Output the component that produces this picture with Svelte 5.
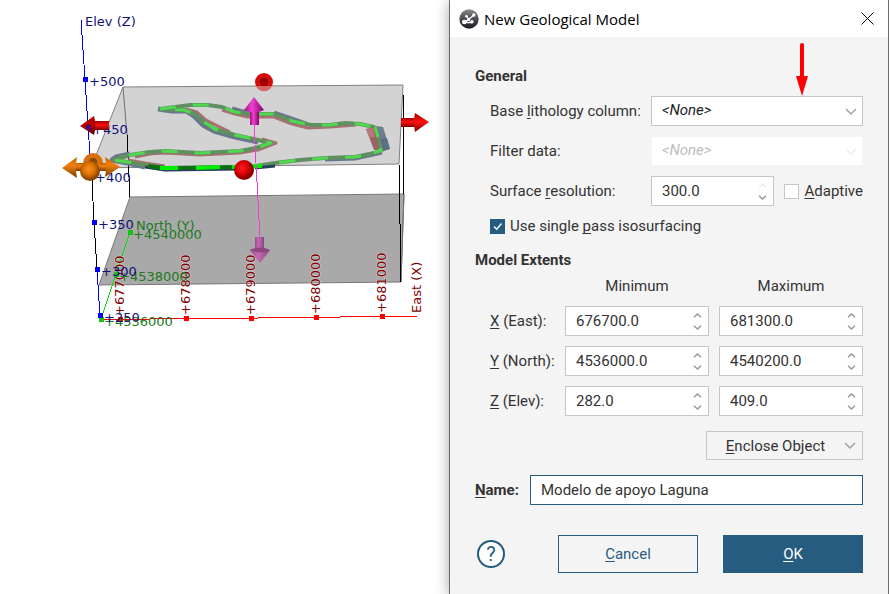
<script>
  let baseLithology = $state('none');
  let filterData = $state('none');
  let resolution = $state('300.0');
  let adaptive = $state(false);
  let singlePass = $state(true);
  let name = $state('Modelo de apoyo Laguna');

  let extents = $state([
    { id: 'x', key: 'X', rest: ' (East):', min: '676700.0', max: '681300.0' },
    { id: 'y', key: 'Y', rest: ' (North):', min: '4536000.0', max: '4540200.0' },
    { id: 'z', key: 'Z', rest: ' (Elev):', min: '282.0', max: '409.0' }
  ]);

  const elevTicks = [
    { x: 85, y: 79, tx: 89, ty: 86, label: '+500' },
    { x: 88, y: 127, tx: 92, ty: 134, label: '+450' },
    { x: 91, y: 175, tx: 95, ty: 182, label: '+400' },
    { x: 94, y: 222, tx: 98, ty: 229, label: '+350' },
    { x: 97, y: 269, tx: 101, ty: 276, label: '+300' },
    { x: 100, y: 315, tx: 104, ty: 322, label: '+250' }
  ];

  const northTicks = [
    { x: 130, y: 232, tx: 133, ty: 239, label: '+4540000' },
    { x: 116, y: 274, tx: 119, ty: 281, label: '+4538000' },
    { x: 101, y: 319, tx: 104, ty: 326, label: '+4536000' }
  ];

  const eastTicks = [
    { x: 120, y: 319, label: '+677000' },
    { x: 186, y: 318, label: '+678000' },
    { x: 251, y: 318, label: '+679000' },
    { x: 316, y: 317, label: '+680000' },
    { x: 382, y: 316, label: '+681000' }
  ];

  // closed outline of the lagoon surface
  const outline =
    'M160 109 L175 107 190 105 208 105 222 107 235 112 248 114 262 114 274 114 292 121 311 125 330 125 345 123 360 124 374 127 378 136 382 150 375 153 355 157 325 158 300 160 275 163 250 167 200 168 165 168 145 165 128 162 114 160 130 155 150 152 165 151 200 153 240 151 256 148 271 143 258 140 235 135 215 129 204 122 195 114 184 110 Z';

  function step(value, amount) {
    return (parseFloat(value) + amount).toFixed(1);
  }
</script>

{#snippet chevron(up)}
  <svg class="spin-icon" viewBox="0 0 9 5" aria-hidden="true">
    <path d={up ? 'M1 4.3 4.5 1 8 4.3' : 'M1 .7 4.5 4 8 .7'} />
  </svg>
{/snippet}

{#snippet dropIcon()}
  <svg class="drop-icon" viewBox="0 0 12 7" aria-hidden="true">
    <path d="M1 1 6 6 11 1" />
  </svg>
{/snippet}

<div class="app">
  <main class="scene">
    <svg viewBox="0 0 449 594" role="img" aria-label="3D model extents">
      <defs>
        <linearGradient id="redShaft" x1="0" y1="0" x2="0" y2="1">
          <stop offset="0" stop-color="#a00000" />
          <stop offset=".45" stop-color="#ff1010" />
          <stop offset="1" stop-color="#800000" />
        </linearGradient>
        <linearGradient id="darkRed" x1="0" y1="0" x2="0" y2="1">
          <stop offset="0" stop-color="#c00000" />
          <stop offset=".5" stop-color="#b00000" />
          <stop offset="1" stop-color="#600000" />
        </linearGradient>
        <linearGradient id="orangeShaft" x1="0" y1="0" x2="0" y2="1">
          <stop offset="0" stop-color="#c86400" />
          <stop offset=".4" stop-color="#f08010" />
          <stop offset="1" stop-color="#7a3c00" />
        </linearGradient>
        <linearGradient id="pinkShaft">
          <stop offset="0" stop-color="#a01080" />
          <stop offset=".4" stop-color="#f040d0" />
          <stop offset="1" stop-color="#800068" />
        </linearGradient>
        <linearGradient id="mauveShaft">
          <stop offset="0" stop-color="#96508a" />
          <stop offset=".4" stop-color="#c868b4" />
          <stop offset="1" stop-color="#82487a" />
        </linearGradient>
        <radialGradient id="redBall" cx=".4" cy=".4">
          <stop offset="0" stop-color="#ff2020" />
          <stop offset=".6" stop-color="#dc0000" />
          <stop offset="1" stop-color="#8c0000" />
        </radialGradient>
        <radialGradient id="orangeBall" cx=".45" cy=".4">
          <stop offset="0" stop-color="#ff9020" />
          <stop offset=".6" stop-color="#d87000" />
          <stop offset="1" stop-color="#8c4800" />
        </radialGradient>
      </defs>

      <!-- bounding box -->
      <polygon class="bottom-face" points="130,197 404,194 401,282 99,285" />
      <polygon class="top-face" points="123,87 403,85 399,164 91,168" />
      <path class="box-edge" d="M123 87 127 135 M404 194 401 282" />
      <path class="box-line" d="M127 135 130 197 M403 93 404 194 M399 164 401 282" />

      <!-- outline ribbon -->
      <g class="ribbon">
        <path class="ribbon-blue" d="M158 109 172 111 186 111 194 116 203 125 214 131 235 137 258 142 M232 109 250 114 M274 113 292 119 306 124 M145 167 128 163 112 160 116 157 130 154 M325 159 355 158 382 152" />
        <path class="ribbon-brown" d="M186 109 197 112 206 120 218 126 230 132 M222 110 235 114 248 117 274 117 292 124 308 128 330 127 356 125 M135 157 150 154 165 153 200 155 240 153 258 150 276 143 262 139 M128 160 145 163 165 166" />
        <path class="ribbon-base" d={outline} />
        <path class="ribbon-dash" d={outline} />
        <polygon fill="#9a6464" points="366,129 374,127 381,150 374,150" />
        <polygon fill="#b87878" points="366,129 373,128 375,137 369,137" />
        <polygon fill="#6c7e94" points="376,126 383,127 390,149 383,151" />
        <polygon fill="#5c6e84" points="380,139 387,138 390,149 383,151" />
        <path stroke="#609060" stroke-width="3" d="M376 127 381 150" />
        <path stroke="#50d850" stroke-width="3" d="M375 127 378 137 M382 149 374 153" />
      </g>
      <g class="front">
        <path class="front-shade" d="M145 167 165 170 240 169 M255 168 275 166" />
        <path class="front-dark" d="M148 166 165 168 240 167" />
        <path class="front-bright" d="M160 168 178 168 M196 168 220 167 M232 167 262 166" />
      </g>

      <!-- axes -->
      <path class="axis blue" d="M81 20 85 79 88 127 92 180" />
      <path class="axis black" d="M92 180 94 222 97 269" />
      <path class="axis blue" d="M97 269 100 316" />
      <path class="axis green" d="M101 319 130 232" />
      <path class="axis red" d="M101 319.5 H150 M150 318.5 H258 M258 317.5 H340 M340 316.5 H417" />
      {#each eastTicks as t}
        <rect x={t.x - 2} y={t.y - 2} width="5" height="5" fill="#ff0000" />
        <text class="label east" transform="translate({t.x + 4} {t.y - 3}) rotate(-90)">{t.label}</text>
      {/each}
      <text class="label east" transform="translate(421 313) rotate(-90)">East (X)</text>
      {#each northTicks as t}
        <rect x={t.x - 2} y={t.y - 2} width="5" height="5" fill="#14c414" />
        <text class="label north" x={t.tx} y={t.ty}>{t.label}</text>
      {/each}
      <text class="label north" x="136" y="230">North (Y)</text>
      {#each elevTicks as t}
        <rect x={t.x - 2} y={t.y - 2} width="5" height="5" fill="#0000ff" />
        <text class="label elev" x={t.tx} y={t.ty}>{t.label}</text>
      {/each}
      <text class="label elev" x="85" y="26">Elev (Z)</text>

      <!-- drag handles -->
      <path class="axis pink" d="M254 125 257 182 260 238" />
      <rect x="250" y="109" width="9" height="16" fill="url(#pinkShaft)" />
      <path fill="url(#pinkShaft)" d="M254 97 264 110 Q254 115 244 110 Z" />
      <rect x="255" y="237" width="9" height="15" fill="url(#mauveShaft)" />
      <path fill="url(#mauveShaft)" d="M250 250 Q260 245 270 250 L260 263 Z" />
      <path fill="#8c4880" d="M250 250 Q260 245 270 250 Q260 255 250 250 Z" />

      <circle cx="264" cy="82" r="9" fill="#d40c0c" />
      <circle cx="264" cy="82" r="4" fill="#800000" />
      <path fill="#a80000" d="M261 82 Q264 77 267 82 V87 H261 Z" />
      <path fill="#dc8080" fill-opacity=".75" d="M256 86 H272 Q264 97 256 86 Z" />

      <rect x="92" y="121" width="17" height="9" fill="url(#redShaft)" />
      <path fill="url(#darkRed)" d="M80 126 94 116 Q97 126 94 135 Z" />
      <rect x="86" y="125" width="5" height="5" fill="#500070" />
      <rect x="401" y="118" width="16" height="9" fill="url(#redShaft)" />
      <path fill="url(#redShaft)" d="M429 122 415 113 Q413 122 415 132 Z" />
      <circle cx="244" cy="170" r="10" fill="url(#redBall)" />

      <circle cx="93" cy="163" r="10" fill="#d87010" />
      <circle cx="93" cy="162" r="4" fill="#8c4600" />
      <rect x="75" y="163" width="32" height="8" fill="url(#orangeShaft)" />
      <path fill="url(#orangeShaft)" d="M62 168 77 157 Q75 167 77 178 Z" />
      <path fill="url(#orangeShaft)" d="M120 167 105 157 Q107 167 105 177 Z" />
      <circle cx="90" cy="171" r="10" fill="url(#orangeBall)" />
    </svg>
  </main>

  <section class="dialog" role="dialog" aria-labelledby="dialog-title">
    <header class="titlebar">
      <svg class="logo" viewBox="0 0 20 20" aria-hidden="true">
        <defs>
          <linearGradient id="logoFill" x1="0" y1="0" x2="0" y2="1">
            <stop offset="0" stop-color="#8a8a8d" />
            <stop offset=".5" stop-color="#4a4b4f" />
            <stop offset="1" stop-color="#1a1b20" />
          </linearGradient>
        </defs>
        <circle cx="10" cy="10" r="9.7" fill="url(#logoFill)" />
        <path d="M5 13.5 9.5 10.5 15 6 M5 13.5 H13 M7.5 7 9.5 10" stroke="#fff" stroke-width="1.3" fill="none" />
        <circle cx="5.3" cy="13" r="2.3" fill="#fff" />
        <circle cx="14.8" cy="6" r="1.7" fill="#fff" />
        <circle cx="7.5" cy="7.3" r="1.3" fill="#fff" />
        <circle cx="13" cy="12.7" r="1.7" fill="#fff" />
        <circle cx="9.7" cy="10.5" r="1.6" fill="#fff" />
      </svg>
      <h1 id="dialog-title">New Geological Model</h1>
      <button class="close" aria-label="Close">
        <svg viewBox="0 0 13 13" aria-hidden="true"><path d="M.5 .5 12.5 12.5 M12.5 .5 .5 12.5" /></svg>
      </button>
    </header>

    <form class="body" onsubmit={(e) => e.preventDefault()}>
      <h2>General</h2>
      <div class="fields">
        <label for="base">Base <u>l</u>ithology column:</label>
        <div class="select">
          <select id="base" bind:value={baseLithology}>
            <option value="none">&lt;None&gt;</option>
          </select>
          {@render dropIcon()}
        </div>

        <label for="filter">Filter data:</label>
        <div class="select disabled">
          <select id="filter" bind:value={filterData} disabled>
            <option value="none">&lt;None&gt;</option>
          </select>
          {@render dropIcon()}
        </div>

        <label for="resolution">Surface <u>r</u>esolution:</label>
        <div class="resolution">
          <div class="spin">
            <input id="resolution" type="text" inputmode="decimal" bind:value={resolution} />
            <div class="steps">
              <button type="button" class="faint" aria-label="Increase" onclick={() => (resolution = step(resolution, 1))}>{@render chevron(true)}</button>
              <button type="button" aria-label="Decrease" onclick={() => (resolution = step(resolution, -1))}>{@render chevron(false)}</button>
            </div>
          </div>
          <label class="check">
            <input type="checkbox" bind:checked={adaptive} />
            <span><u>A</u>daptive</span>
          </label>
        </div>
      </div>
      <label class="check single-pass">
        <input type="checkbox" bind:checked={singlePass} />
        <span>Use single <u>p</u>ass isosurfacing</span>
      </label>

      <h2>Model Extents</h2>
      <div class="extents">
        <span></span>
        <span class="column" id="col-min">Minimum</span>
        <span class="column" id="col-max">Maximum</span>
        {#each extents as row}
          <label for="{row.id}-min"><u>{row.key}</u>{row.rest}</label>
          {#each ['min', 'max'] as side}
            <div class="spin">
              <input id="{row.id}-{side}" type="text" inputmode="decimal" aria-describedby="col-{side}" aria-label="{row.key} {side}" bind:value={row[side]} />
              <div class="steps">
                <button type="button" aria-label="Increase" onclick={() => (row[side] = step(row[side], 1))}>{@render chevron(true)}</button>
                <button type="button" aria-label="Decrease" onclick={() => (row[side] = step(row[side], -1))}>{@render chevron(false)}</button>
              </div>
            </div>
          {/each}
        {/each}
      </div>

      <button type="button" class="enclose">
        <span><u>E</u>nclose Object</span>
        {@render dropIcon()}
      </button>

      <div class="name-row">
        <label for="name"><u>N</u>ame:</label>
        <input id="name" type="text" bind:value={name} />
      </div>

      <footer>
        <button type="button" class="help" aria-label="Help">?</button>
        <button type="button" class="action"><span><u>C</u>ancel</span></button>
        <button type="submit" class="action primary"><span><u>O</u>K</span></button>
      </footer>
    </form>

    <svg class="pointer" viewBox="0 0 12 53" aria-hidden="true">
      <path d="M6 2 V36" stroke="#ff0000" stroke-width="4" stroke-linecap="round" />
      <path d="M0 33 H12 L6 53 Z" fill="#ff0000" />
    </svg>
  </section>
</div>

<style>
  :global(body) {
    margin: 0;
    background: #fff;
  }

  .app {
    display: grid;
    grid-template-columns: minmax(0, 449fr) minmax(0, 440fr);
    min-height: 100vh;
    overflow: hidden;
    font-family: Roboto, "Liberation Sans", sans-serif;
    font-size: 15px;
    line-height: 20px;
    color: #333;
  }

  .scene svg {
    display: block;
    width: 100%;
    height: auto;
  }

  .top-face {
    fill: #d3d3d3;
    stroke: #808080;
    stroke-width: 1;
  }

  .bottom-face {
    fill: #a9a9a9;
    stroke: #787878;
    stroke-width: 1;
  }

  .box-edge {
    fill: none;
    stroke: #707070;
  }

  .box-line {
    fill: none;
    stroke: #000;
    shape-rendering: crispEdges;
  }

  .ribbon path,
  .front path {
    fill: none;
    stroke-linejoin: round;
  }

  .ribbon .ribbon-blue {
    stroke: #66788c;
    stroke-width: 5;
  }

  .ribbon .ribbon-brown {
    stroke: #a87070;
    stroke-width: 3;
  }

  .ribbon .ribbon-base {
    stroke: #609060;
    stroke-width: 4;
  }

  .ribbon .ribbon-dash {
    stroke: #50d850;
    stroke-width: 3;
    stroke-dasharray: 16 17;
  }

  .front-shade {
    stroke: #24405c;
    stroke-width: 3;
  }

  .front-dark {
    stroke: #0c7010;
    stroke-width: 4;
  }

  .front-bright {
    stroke: #00f000;
    stroke-width: 4;
  }

  .axis {
    fill: none;
    stroke-width: 1;
    shape-rendering: crispEdges;
  }

  .blue {
    stroke: #0000ff;
  }

  .black {
    stroke: #000;
  }

  .green {
    stroke: #00e000;
  }

  .red {
    stroke: #ff0000;
  }

  .pink {
    stroke: #f03cd0;
  }

  .label {
    font-family: "DejaVu Sans", sans-serif;
    font-size: 13px;
  }

  .elev {
    fill: #10107c;
  }

  .north {
    fill: #207820;
  }

  .east {
    fill: #800000;
    stroke: #fff;
    stroke-width: 1;
    stroke-opacity: 0.6;
    paint-order: stroke;
  }

  .dialog {
    position: relative;
    display: flex;
    flex-direction: column;
    border: 1px solid #6c6c6c;
    border-width: 0 1px;
    background: #f4f4f4;
    box-shadow: 0 2px 14px rgba(0, 0, 0, 0.35);
  }

  .titlebar {
    display: flex;
    align-items: center;
    height: 37px;
    padding: 0 14px 0 9px;
    background: #fff;
    box-sizing: border-box;
  }

  .logo {
    width: 20px;
    height: 20px;
  }

  h1 {
    flex: 1;
    margin: 0 0 0 5px;
    font: 400 15px/20px "Open Sans", "Noto Sans", sans-serif;
    color: #000;
  }

  button {
    padding: 0;
    border: 0;
    background: none;
    font: inherit;
    color: inherit;
  }

  .close svg {
    display: block;
    width: 13px;
    height: 13px;
    stroke: #000;
  }

  .body {
    display: flex;
    flex-direction: column;
    padding: 29px 25px 21px;
  }

  h2 {
    margin: 0;
    font-size: 15px;
    line-height: 20px;
    font-weight: 700;
  }

  u {
    text-decoration: underline;
    text-decoration-thickness: 1px;
    text-underline-offset: 2px;
    text-decoration-skip-ink: none;
  }

  .fields {
    display: grid;
    grid-template-columns: 161px minmax(0, 1fr);
    grid-auto-rows: 30px;
    row-gap: 10px;
    align-items: center;
    margin: 10px 0 10px 15px;
  }

  .fields > label,
  .extents > label {
    white-space: nowrap;
  }

  .select {
    display: grid;
    align-items: center;
  }

  .select select,
  .select :global(svg) {
    grid-area: 1 / 1;
  }

  .select select {
    appearance: none;
    width: 100%;
    height: 30px;
    padding: 0 30px 2px 10px;
    border: 1px solid #c6c6c6;
    border-radius: 0;
    background: #fff;
    font: inherit;
    font-style: italic;
    color: #222;
  }

  .drop-icon {
    justify-self: end;
    width: 12px;
    height: 7px;
    margin-right: 6px;
    fill: none;
    stroke: #a2a2a2;
    stroke-width: 1.5;
    pointer-events: none;
  }

  .disabled select {
    border-color: #f4f4f4;
    color: #bdbdbd;
    opacity: 1;
  }

  .disabled .drop-icon {
    stroke: #ececec;
  }

  .resolution {
    display: flex;
    align-items: center;
    gap: 10px;
  }

  .resolution .spin {
    flex: 1;
  }

  .spin {
    display: flex;
    height: 30px;
    min-width: 0;
    border: 1px solid #c6c6c6;
    background: #fff;
    box-sizing: border-box;
  }

  .spin input {
    flex: 1;
    min-width: 0;
    padding: 0 0 0 10px;
    border: 0;
    background: none;
    font: inherit;
    color: #333;
  }

  .steps {
    display: flex;
    flex-direction: column;
    justify-content: center;
    gap: 7px;
    padding-right: 6px;
  }

  .steps button {
    display: block;
  }

  .spin-icon {
    display: block;
    width: 9px;
    height: 5px;
    fill: none;
    stroke: #999;
    stroke-width: 1.5;
  }

  .faint .spin-icon {
    stroke: #ececec;
  }

  .check {
    display: flex;
    align-items: center;
    gap: 5px;
    white-space: nowrap;
  }

  .check input {
    appearance: none;
    width: 15px;
    height: 15px;
    margin: 0;
    border: 1px solid #c6c6c6;
    background: #fff;
  }

  .check input:checked {
    border-color: #265c7f;
    background: #265c7f url("data:image/svg+xml,%3Csvg xmlns='http://www.w3.org/2000/svg' viewBox='0 0 13 13'%3E%3Cpath d='M3 6.5 5.7 9.3 10.5 3.5' fill='none' stroke='white' stroke-width='1.4'/%3E%3C/svg%3E");
  }

  .single-pass {
    margin: 0 0 14px 15px;
  }

  .extents {
    display: grid;
    grid-template-columns: 65px minmax(0, 1fr) minmax(0, 1fr);
    gap: 10px;
    align-items: center;
    margin: 6px 0 15px 15px;
  }

  .column {
    text-align: center;
  }

  .enclose {
    display: flex;
    align-items: center;
    align-self: flex-end;
    width: 157px;
    height: 29px;
    border: 1px solid #c6c6c6;
  }

  .enclose span {
    flex: 1;
  }

  .name-row {
    display: flex;
    align-items: center;
    margin: 15px 0 30px;
  }

  .name-row label {
    width: 55px;
    font-weight: 700;
  }

  .name-row input {
    flex: 1;
    min-width: 0;
    height: 30px;
    padding: 0 10px;
    border: 1px solid #265c7f;
    background: #fff;
    box-sizing: border-box;
    font: inherit;
    color: #333;
  }

  footer {
    display: flex;
    align-items: center;
    gap: 25px;
  }

  .help {
    width: 28px;
    height: 28px;
    margin: 0 auto 0 2px;
    border: 2px solid #265c7f;
    border-radius: 50%;
    background: #fff;
    font-size: 20px;
    color: #265c7f;
  }

  .action {
    width: 140px;
    height: 38px;
    border: 1px solid #265c7f;
    color: #265c7f;
  }

  .primary {
    background: #265c7f;
    color: #fff;
  }

  .pointer {
    position: absolute;
    top: 43px;
    right: 80px;
    width: 12px;
    height: 53px;
    fill: none;
  }
</style>
